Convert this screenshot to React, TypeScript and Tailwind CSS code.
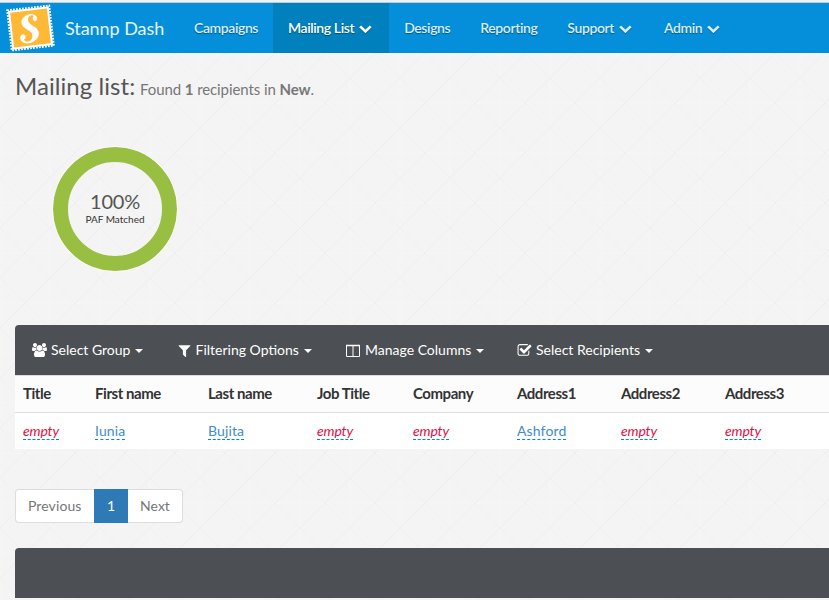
import React from "react";

const lato = "font-[Lato,'Open_Sans',sans-serif]";

function Backdrop() {
  return (
    <svg className="absolute inset-0 -z-10 h-full w-full" aria-hidden="true">
      <defs>
        <pattern id="diamonds" width="50" height="50" y="28" patternUnits="userSpaceOnUse">
          <path d="M0 25H50M0 0V50M50 0V50" stroke="#f6f6f6" strokeWidth="1" />
          <path d="M0 50L50 0" stroke="#eeeeee" strokeWidth="1" />
          <path d="M0 0L50 50" stroke="#f0f0f0" strokeWidth="1" />
        </pattern>
      </defs>
      <rect width="100%" height="100%" fill="#f4f4f4" />
      <rect width="100%" height="100%" fill="url(#diamonds)" />
    </svg>
  );
}

function Logo() {
  return (
    <svg className="h-[50px] w-[56px] shrink-0" viewBox="0 0 56 50">
      <g transform="rotate(-6.5 30.3 25)">
        <rect x="10" y="5.5" width="41" height="39" fill="#fff" />
        <rect x="9.3" y="4.8" width="42.4" height="40.4" fill="none" stroke="#fff" strokeWidth="1.9" strokeDasharray="1.7 1.3" />
        <rect x="12" y="7.5" width="37" height="35" fill="#ffb937" />
      </g>
      <path
        d="M34.6 18.2C37 18.6 37.8 15.6 36.2 13.3C34.3 10.6 29.5 10.2 25.8 12.6C21.2 15.6 20.2 20.1 23 23.4C25.8 26.5 31.6 27.7 32.3 31.8C32.9 35.6 30.6 38.6 27.4 38.6C25.5 38.6 24.2 37.6 24.1 36.2C26 35.5 26.2 32.3 24 31.4C21.7 30.6 19.7 33 20.4 36C21.2 39.6 25.4 41.3 30.2 39.9C36.6 38 39.8 33.2 38.7 28.9C37.3 23.4 29.8 22.4 28.4 18.4C27.4 15.4 28.8 12.6 31.4 12.3C32.8 12.2 33.6 12.8 33.6 13.6C32 14.5 32.4 17.6 34.6 18.2Z"
        fill="#fff"
      />
    </svg>
  );
}

function Chevron() {
  return (
    <svg className="mr-[2px] ml-[5px] h-[9px] w-[13px] translate-y-px drop-shadow-[0_1px_0_rgba(0,0,0,0.3)]" viewBox="0 0 13 9">
      <path d="M1.1 1.4L6.4 6.5L11.7 1.4" fill="none" stroke="currentColor" strokeWidth="2.7" />
    </svg>
  );
}

function NavItem({ label, menu, active }: { label: string; menu?: boolean; active?: boolean }) {
  return (
    <a className={`flex h-[50px] items-center px-[15px] text-[14px] font-semibold tracking-[-0.4px] whitespace-nowrap [text-shadow:0_1px_1px_rgba(0,0,0,0.4)] ${active ? "bg-[#0080bd] text-white" : "text-[#d9edf8]"}`}>
      {label}
      {menu && <Chevron />}
    </a>
  );
}

function Caret() {
  return <span className="mt-[2px] ml-[5px] border-x-4 border-t-4 border-x-transparent border-t-current" />;
}

const icons = {
  users: (
    <svg className="mr-1 ml-px h-[14px] w-[15px]" viewBox="0 0 1920 1792" fill="currentColor">
      <path d="M593 896q-162 5-265 128H194q-82 0-138-40.5T0 865q0-353 124-353 6 0 43.5 21t97.5 42.5T384 597q67 0 133-23-5 37-5 66 0 139 81 256zm1071 637q0 120-73 189.5t-194 69.5H523q-121 0-194-69.5T256 1533q0-53 3.5-103.5t14-109T300 1212t43-97.5 62-81 85.5-53.5T602 960q10 0 43 21.5t73 48 107 48T960 1099t135-21.5 107-48 73-48 43-21.5q61 0 111.5 20t85.5 53.5 62 81 43 97.5 26.5 108.5 14 109 3.5 103.5zM640 256q0 106-75 181t-181 75-181-75-75-181 75-181T384 0t181 75 75 181zm704 384q0 159-112.5 271.5T960 1024 688.5 911.5 576 640t112.5-271.5T960 256t271.5 112.5T1344 640zm576 225q0 78-56 118.5t-138 40.5h-134q-103-123-265-128 81-117 81-256 0-29-5-66 66 23 133 23 59 0 119-21.5t97.5-42.5 43.5-21q124 0 124 353zm-128-609q0 106-75 181t-181 75-181-75-75-181 75-181 181-75 181 75 75 181z" />
    </svg>
  ),
  filter: (
    <svg className="mr-1 h-[15px] w-[15px]" viewBox="0 0 1792 1792" fill="currentColor">
      <path d="M1595 295q17 41-14 70l-493 493v742q0 42-39 59-13 5-25 5-27 0-45-19l-256-256q-19-19-19-45V858L211 365q-31-29-14-70 17-39 59-39h1280q42 0 59 39z" />
    </svg>
  ),
  columns: (
    <svg className="mr-[5px] h-[13px] w-[14px]" viewBox="0 0 14 13" fill="none" stroke="currentColor">
      <path d="M.5 1.5H13.5V12.5H.5ZM7 1V12" />
      <path d="M0 1.5H14" strokeWidth="1.5" />
    </svg>
  ),
  check: (
    <svg className="mr-[4px] h-[15px] w-[15px]" viewBox="0 0 1792 1792" fill="currentColor">
      <path d="M1472 930v318q0 119-84.5 203.5t-203.5 84.5h-832q-119 0-203.5-84.5t-84.5-203.5v-832q0-119 84.5-203.5t203.5-84.5h832q63 0 117 25 15 7 18 23 3 17-9 29l-49 49q-10 10-23 10-3 0-9-2-23-6-45-6h-832q-66 0-113 47t-47 113v832q0 66 47 113t113 47h832q66 0 113-47t47-113v-254q0-13 9-22l64-64q10-10 23-10 6 0 12 3 20 8 20 29zm231-489l-814 814q-24 24-57 24t-57-24l-430-430q-24-24-24-57t24-57l110-110q24-24 57-24t57 24l263 263 647-647q24-24 57-24t57 24l110 110q24 24 24 57t-24 57z" />
    </svg>
  ),
};

function ToolItem({ icon, label, className }: { icon: React.ReactNode; label: string; className: string }) {
  return (
    <button className={`flex h-[50px] shrink-0 items-center whitespace-nowrap ${className}`}>
      {icon}
      <span>{label}</span>
      <Caret />
    </button>
  );
}

const columns = [
  { name: "Title", width: "w-[72px]", value: "" },
  { name: "First name", width: "w-[113px]", value: "Iunia" },
  { name: "Last name", width: "w-[109px]", value: "Bujita" },
  { name: "Job Title", width: "w-[96px]", value: "" },
  { name: "Company", width: "w-[104px]", value: "" },
  { name: "Address1", width: "w-[104px]", value: "Ashford" },
  { name: "Address2", width: "w-[104px]", value: "" },
  { name: "Address3", width: "w-[112px]", value: "" },
];

export default function App() {
  return (
    <div className={`relative isolate h-[600px] w-[829px] overflow-hidden text-[14px] leading-5 text-[#333] ${lato}`}>
      <Backdrop />
      <header className="flex h-[53px] border-t-2 border-[#f1f1f1] bg-[#058fdb]">
        <div className="flex w-full border-t border-[#b9cdd9]">
          <Logo />
          <div className="flex w-[123px] items-center pl-[9px] text-[18px] tracking-[-0.05px] whitespace-nowrap text-[#e8f5fc]">Stannp Dash</div>
          <nav className="flex">
            <NavItem label="Campaigns" />
            <NavItem label="Mailing List" menu active />
            <NavItem label="Designs" />
            <NavItem label="Reporting" />
            <NavItem label="Support" menu />
            <NavItem label="Admin" menu />
          </nav>
        </div>
      </header>

      <main className="pl-[15px]">
        <h1 className="pt-[20px] text-[24px] leading-[26px] tracking-[0.06px] text-[#555]">
          Mailing list:{" "}
          <small className="-ml-[1.5px] text-[15px] tracking-[-0.09px] text-[#777]">
            Found <b>1</b> recipients in <b>New</b>.
          </small>
        </h1>

        <div className="mt-[45px] ml-[38px] flex h-[124px] w-[124px] flex-col items-center justify-center rounded-full border-[15px] border-[#98bf41] pb-[2px] outline outline-white/60">
          <span className="text-[20px] leading-[22px] tracking-[-0.2px] text-[#555]">100%</span>
          <span className="text-[10px] leading-[14px] whitespace-nowrap">PAF Matched</span>
        </div>

        <div className="mt-[54px] flex h-[50px] rounded-tl bg-[#4c4f53] pl-4 text-white">
          <ToolItem icon={icons.users} label="Select Group" className="w-[145.5px]" />
          <ToolItem icon={icons.filter} label="Filtering Options" className="w-[169.5px]" />
          <ToolItem icon={icons.columns} label="Manage Columns" className="w-[171px]" />
          <ToolItem icon={icons.check} label="Select Recipients" className="w-[160px]" />
        </div>
        <table className="w-[814px] table-fixed border-collapse bg-white text-left">
          <thead>
            <tr className="h-[37px] border-y border-[#ddd] bg-[#fcfcfc]">
              {columns.map((c) => (
                <th key={c.name} className={`${c.width} p-0 pb-[2px] pl-2 text-[15px] leading-5 font-bold tracking-[-0.45px]`}>{c.name}</th>
              ))}
            </tr>
          </thead>
          <tbody>
            <tr className="h-[36px]">
              {columns.map((c) => (
                <td key={c.name} className="p-0 pl-2">
                  <a className={`border-b border-dashed border-[#0088cc] ${c.value ? "tracking-[0.12px] text-[#428bca]" : "tracking-[-0.15px] text-[#dd1144] italic"}`}>
                    {c.value || "empty"}
                  </a>
                </td>
              ))}
            </tr>
          </tbody>
        </table>

        <div className="mt-[40px] flex h-[34px] w-[168px] text-[#777]">
          <a className="flex w-[79px] items-center rounded-l border border-r-0 border-[#ddd] bg-white pl-3 tracking-[0.1px]">Previous</a>
          <a className="flex w-[34px] items-center justify-center bg-[#2d7ab7] text-white">1</a>
          <a className="flex w-[55px] items-center justify-center rounded-r border border-l-0 border-[#ddd] bg-white">Next</a>
        </div>
        <div className="mt-[25px] h-[50px] rounded-tl bg-[#4c4f53]" />
      </main>
    </div>
  );
}
